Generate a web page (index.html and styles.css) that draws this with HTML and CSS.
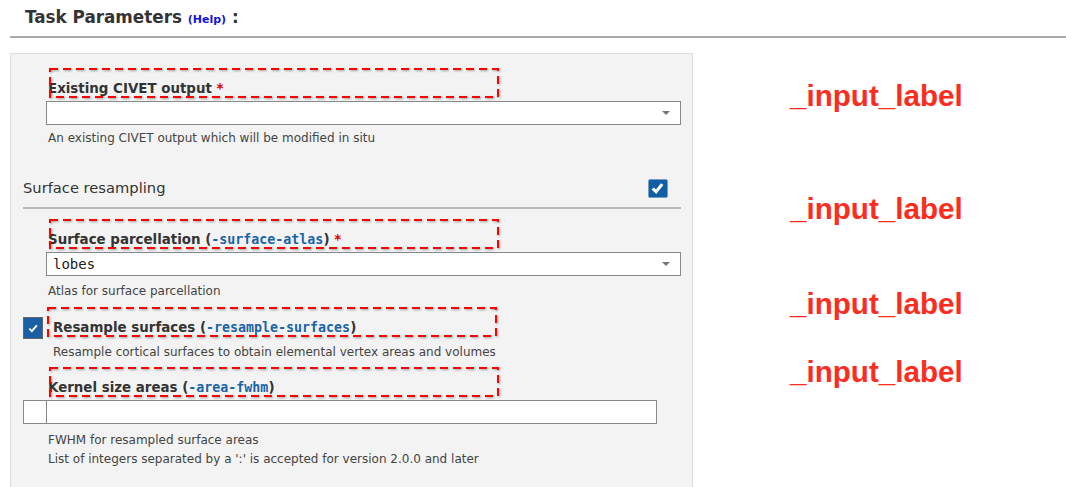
FILE: index.html
```html
<!DOCTYPE html>
<html>
<head>
<meta charset="utf-8">
<link rel="stylesheet" href="styles.css">
</head>
<body>
<h2 class="title">Task Parameters <a class="help" href="#">(Help)</a> :</h2>
<div class="rule"></div>
<div class="main">
  <div class="panel">
    <div class="field f1">
      <div class="label"><span class="mark"><svg><rect x="0" y="0" width="100%" height="100%"/></svg></span>Existing CIVET output <span class="req">*</span></div>
      <div class="select"><span class="value"></span><span class="arrow"></span></div>
      <div class="desc">An existing CIVET output which will be modified in situ</div>
    </div>
    <div class="section">
      <span class="section-title">Surface resampling</span>
      <span class="cb-big"><svg viewBox="0 0 19 19"><path d="M3.6 10.4 L5.9 8.4 L7.9 10.6 L13 4.2 L15.4 6.1 L8.2 14.9 Z" /></svg></span>
    </div>
    <div class="field f2">
      <div class="label"><span class="mark"><svg><rect x="0" y="0" width="100%" height="100%"/></svg></span>Surface parcellation (<code>-surface-atlas</code>) <span class="req">*</span></div>
      <div class="select"><span class="value">lobes</span><span class="arrow"></span></div>
      <div class="desc">Atlas for surface parcellation</div>
    </div>
    <div class="field f3">
      <span class="cb-small"><svg viewBox="0 0 20 22"><path d="M6.3 11.6 L8.9 14.1 L13.8 8.4" /></svg></span>
      <div class="f3-body">
        <div class="label"><span class="mark"><svg><rect x="0" y="0" width="100%" height="100%"/></svg></span>Resample surfaces (<code>-resample-surfaces</code>)</div>
        <div class="desc">Resample cortical surfaces to obtain elemental vertex areas and volumes</div>
      </div>
    </div>
    <div class="field f4">
      <div class="label"><span class="mark"><svg><rect x="0" y="0" width="100%" height="100%"/></svg></span>Kernel size areas (<code>-area-fwhm</code>)</div>
      <div class="inputs"><span class="prefix"></span><span class="text-input"></span></div>
      <div class="desc">FWHM for resampled surface areas</div>
      <div class="desc">List of integers separated by a ':' is accepted for version 2.0.0 and later</div>
    </div>
  </div>
  <div class="notes">
    <div class="note n1">_input_label</div>
    <div class="note n2">_input_label</div>
    <div class="note n3">_input_label</div>
    <div class="note n4">_input_label</div>
  </div>
</div>
</body>
</html>
```
FILE: styles.css
```css
html, body {
  margin: 0;
  padding: 0;
  background: #ffffff;
  font-family: "DejaVu Sans", sans-serif;
  color: #333333;
  overflow: hidden;
}

.title {
  margin: 0;
  padding: 6px 0 0 25px;
  height: 32px;
  box-sizing: border-box;
  font-size: 16.8px;
  line-height: 22px;
  font-weight: bold;
  color: #333333;
}

.help {
  font-size: 11px;
  color: #1515d8;
  text-decoration: none;
  font-weight: bold;
}

.rule {
  margin: 4px 0 0 10px;
  height: 2px;
  background: #aaaaaa;
}

.main {
  display: flex;
  margin-top: 15px;
}

.panel {
  margin-left: 10px;
  width: 683px;
  height: 440px;
  box-sizing: border-box;
  background: #f3f3f3;
  border: 1px solid #dddddd;
  border-bottom: none;
  padding: 0 11px 0 12px;
}

.field {
  margin-left: 23px;
}

.label {
  position: relative;
  padding-left: 2px;
  font-size: 13.4px;
  line-height: 16px;
  font-weight: bold;
  color: #333333;
}

.mark {
  position: absolute;
  left: 4px;
  top: -12px;
  width: 448px;
  height: 28px;
  filter: drop-shadow(1px 1.5px 1px rgba(0, 0, 0, 0.35));
}

.mark svg {
  display: block;
  width: 100%;
  height: 100%;
  overflow: visible;
}

.mark rect {
  fill: none;
  stroke: #ff0000;
  stroke-width: 2;
  stroke-dasharray: 8 5;
}

.req {
  color: #d40000;
}

code {
  font-family: "DejaVu Sans Mono", monospace;
  font-size: 13.3px;
  font-weight: bold;
  color: #1a64a8;
}

.select {
  display: flex;
  align-items: center;
  justify-content: space-between;
  height: 24px;
  box-sizing: border-box;
  background: #ffffff;
  border: 1px solid #888888;
  padding: 0 10px 0 6px;
}

.value {
  font-family: "DejaVu Sans Mono", monospace;
  font-size: 14px;
  color: #222222;
}

.arrow {
  width: 0;
  height: 0;
  border-left: 4px solid transparent;
  border-right: 4px solid transparent;
  border-top: 4px solid #777777;
}

.desc {
  padding-left: 2px;
  font-size: 12px;
  line-height: 18px;
  color: #444444;
}

.f1 {
  padding-top: 27px;
}

.f1 .select {
  margin-top: 4px;
}

.f1 .desc {
  margin-top: 4px;
}

.section {
  display: flex;
  justify-content: space-between;
  align-items: flex-start;
  margin-top: 31px;
  height: 31px;
  box-sizing: border-box;
  border-bottom: 2px solid #bbbbbb;
}

.section-title {
  font-size: 14.7px;
  line-height: 20px;
  color: #333333;
}

.cb-big {
  display: block;
  width: 20px;
  height: 19px;
  margin: 1px 13px 0 0;
  box-sizing: border-box;
  background: #0f5ea6;
  border: 1px solid #7a9cc0;
  border-radius: 2px;
}

.cb-big svg {
  display: block;
  width: 19px;
  height: 19px;
  margin: -1px;
}

.cb-big path {
  fill: #ffffff;
  stroke: none;
}

.f2 {
  margin-top: 23px;
}

.f2 .select {
  margin-top: 4px;
}

.f2 .desc {
  margin-top: 6px;
}

.f3 {
  display: flex;
  margin-left: 0;
  margin-top: 20px;
}

.cb-small {
  display: block;
  width: 20px;
  height: 22px;
  margin-top: -3px;
  box-sizing: border-box;
  background: #1a5fa5;
  border: 1px solid #666666;
}

.cb-small svg {
  display: block;
  width: 20px;
  height: 22px;
  margin: -1px;
}

.cb-small path {
  fill: none;
  stroke: #ffffff;
  stroke-width: 2;
}

.f3-body {
  margin-left: 10px;
}

.f3-body .label {
  padding-left: 0;
}

.f3-body .mark {
  left: -5px;
}

.f3-body .desc {
  padding-left: 0;
  margin-top: 8px;
  line-height: 16px;
}

.f4 {
  margin-left: 0;
  margin-top: 20px;
}

.f4 .label {
  margin-left: 23px;
}

.inputs {
  display: flex;
  margin-top: 4px;
  height: 24px;
}

.prefix {
  width: 23px;
  height: 24px;
  box-sizing: border-box;
  background: #ffffff;
  border: 1px solid #888888;
  border-right: none;
}

.text-input {
  width: 611px;
  height: 24px;
  box-sizing: border-box;
  background: #ffffff;
  border: 1px solid #888888;
}

.f4 .desc {
  margin-left: 23px;
  line-height: 19px;
}

.f4 .inputs + .desc {
  margin-top: 7px;
}

.notes {
  margin-left: 97px;
}

.note {
  font-family: "Liberation Sans", Arial, sans-serif;
  font-size: 29.6px;
  line-height: 34px;
  font-weight: bold;
  color: #fe2c1e;
}

.n1 { margin-top: 26px; }
.n2 { margin-top: 79px; }
.n3 { margin-top: 61px; }
.n4 { margin-top: 34px; }
```
